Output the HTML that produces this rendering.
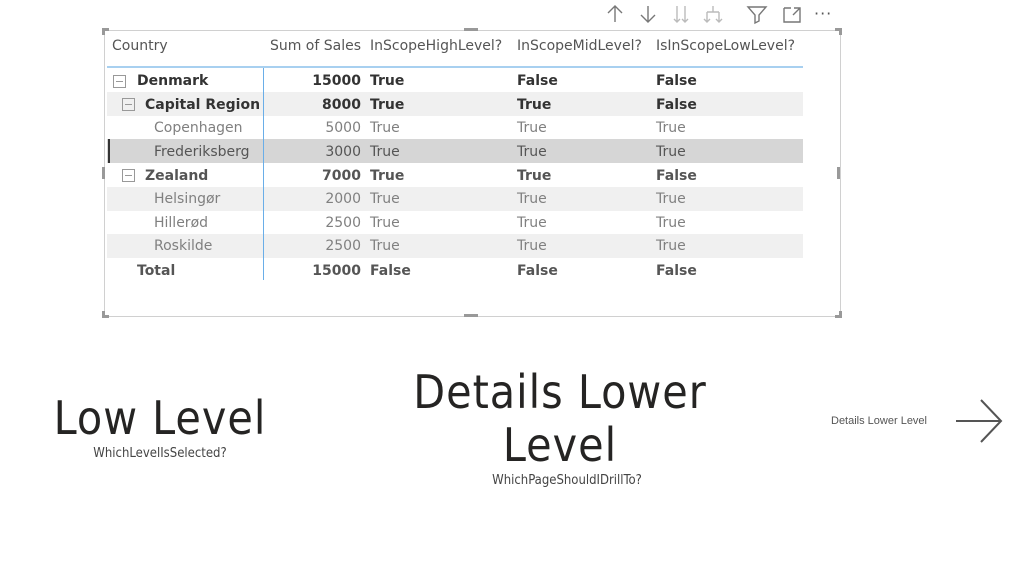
<!DOCTYPE html>
<html><head><meta charset="utf-8"><style>
*{margin:0;padding:0;box-sizing:border-box}
body{width:1024px;height:562px;background:#fff;position:relative;overflow:hidden;font-family:"DejaVu Sans","Liberation Sans",sans-serif}
.a{position:absolute;white-space:nowrap}
.t{font-size:14px;line-height:20px;margin-top:1px}
.h{color:#555;font-size:14px}
.b{font-weight:bold;color:#333}
.l{color:#808080}
.band{position:absolute;left:107px;width:696px;height:24px;background:#f0f0f0}
.r{text-align:right;width:100px}
.box{position:absolute;width:13px;height:13px;border:1px solid #999}
.box:after{content:"";position:absolute;left:2px;top:5px;width:7px;height:1px;background:#999}
.big{font-family:"Liberation Sans Narrow","DejaVu Sans Condensed",sans-serif;color:#252423;font-size:46px;letter-spacing:1px;text-align:center}
.sm{font-family:"Liberation Sans Narrow","DejaVu Sans Condensed",sans-serif;color:#444;font-size:13px;text-align:center}
</style></head><body>
<svg class="a" style="left:600px;top:3px" width="240" height="22" viewBox="600 3 240 22" fill="none" stroke="#777" stroke-width="1.4">
<path d="M615 6v16M608 13l7-7 7 7"/>
<path d="M648 6v16M641 15l7 7 7-7"/>
<path d="M677 6v16M685 6v16M674 19l3 3 3-3M682 19l3 3 3-3" stroke="#bbb"/>
<path d="M713 6v6M707 12h12M707 12v10M719 12v10M704 19l3 3 3-3M716 19l3 3 3-3" stroke="#bbb"/>
<path d="M748 7h18l-7 8v6l-4 2v-8z"/>
<path d="M784 8h7M784 8v14h16v-8M794 8h6v6M800 8l-7 7"/>
</svg>
<div class="a" style="left:814px;top:4px;font-size:16px;color:#555;letter-spacing:1px">···</div>
<div class="a" style="left:104px;top:30px;width:737px;height:287px;border:1px solid #d0d0d0"></div>
<div class="a" style="left:102px;top:28px;width:7px;height:7px;border-left:3px solid #999;border-top:3px solid #999"></div>
<div class="a" style="left:835px;top:28px;width:7px;height:7px;border-right:3px solid #999;border-top:3px solid #999"></div>
<div class="a" style="left:102px;top:311px;width:7px;height:7px;border-left:3px solid #999;border-bottom:3px solid #999"></div>
<div class="a" style="left:835px;top:311px;width:7px;height:7px;border-right:3px solid #999;border-bottom:3px solid #999"></div>
<div class="a" style="left:464px;top:28px;width:14px;height:3px;background:#999"></div>
<div class="a" style="left:464px;top:314px;width:14px;height:3px;background:#999"></div>
<div class="a" style="left:102px;top:167px;width:3px;height:12px;background:#999"></div>
<div class="a" style="left:837px;top:167px;width:3px;height:12px;background:#999"></div>
<div class="a t h" style="left:112px;top:35px">Country</div>
<div class="a t h" style="left:261px;top:35px;width:100px;text-align:right">Sum of Sales</div>
<div class="a t h" style="left:370px;top:35px">InScopeHighLevel?</div>
<div class="a t h" style="left:517px;top:35px">InScopeMidLevel?</div>
<div class="a t h" style="left:656px;top:35px">IsInScopeLowLevel?</div>
<div class="a" style="left:107px;top:66px;width:696px;height:2px;background:#a8d0f0"></div>
<div class="band" style="top:92px"></div>
<div class="band" style="top:139px;background:#d6d6d6"></div>
<div class="a" style="left:108px;top:139px;width:2px;height:24px;background:#333"></div>
<div class="band" style="top:187px"></div>
<div class="band" style="top:234px"></div>
<div class="a" style="left:263px;top:68px;width:1px;height:212px;background:#6aaee8"></div>
<div class="box" style="left:113px;top:75px"></div>
<div class="box" style="left:122px;top:98px"></div>
<div class="box" style="left:122px;top:169px"></div>

<div class="a t b" style="left:137px;top:70px">Denmark</div>
<div class="a t b r" style="left:261px;top:70px">15000</div>
<div class="a t b" style="left:370px;top:70px">True</div>
<div class="a t b" style="left:517px;top:70px">False</div>
<div class="a t b" style="left:656px;top:70px">False</div>

<div class="a t b" style="left:145px;top:94px">Capital Region</div>
<div class="a t b r" style="left:261px;top:94px">8000</div>
<div class="a t b" style="left:370px;top:94px">True</div>
<div class="a t b" style="left:517px;top:94px">True</div>
<div class="a t b" style="left:656px;top:94px">False</div>

<div class="a t l" style="left:154px;top:117px">Copenhagen</div>
<div class="a t l r" style="left:261px;top:117px">5000</div>
<div class="a t l" style="left:370px;top:117px">True</div>
<div class="a t l" style="left:517px;top:117px">True</div>
<div class="a t l" style="left:656px;top:117px">True</div>

<div class="a t" style="left:154px;top:141px;color:#555">Frederiksberg</div>
<div class="a t r" style="left:261px;top:141px;color:#555">3000</div>
<div class="a t" style="left:370px;top:141px;color:#555">True</div>
<div class="a t" style="left:517px;top:141px;color:#555">True</div>
<div class="a t" style="left:656px;top:141px;color:#555">True</div>

<div class="a t b" style="left:145px;top:165px;color:#555">Zealand</div>
<div class="a t b r" style="left:261px;top:165px;color:#555">7000</div>
<div class="a t b" style="left:370px;top:165px;color:#555">True</div>
<div class="a t b" style="left:517px;top:165px;color:#555">True</div>
<div class="a t b" style="left:656px;top:165px;color:#555">False</div>

<div class="a t l" style="left:154px;top:188px">Helsingør</div>
<div class="a t l r" style="left:261px;top:188px">2000</div>
<div class="a t l" style="left:370px;top:188px">True</div>
<div class="a t l" style="left:517px;top:188px">True</div>
<div class="a t l" style="left:656px;top:188px">True</div>

<div class="a t l" style="left:154px;top:212px">Hillerød</div>
<div class="a t l r" style="left:261px;top:212px">2500</div>
<div class="a t l" style="left:370px;top:212px">True</div>
<div class="a t l" style="left:517px;top:212px">True</div>
<div class="a t l" style="left:656px;top:212px">True</div>

<div class="a t l" style="left:154px;top:235px">Roskilde</div>
<div class="a t l r" style="left:261px;top:235px">2500</div>
<div class="a t l" style="left:370px;top:235px">True</div>
<div class="a t l" style="left:517px;top:235px">True</div>
<div class="a t l" style="left:656px;top:235px">True</div>

<div class="a t b" style="left:137px;top:260px;color:#555">Total</div>
<div class="a t b r" style="left:261px;top:260px;color:#555">15000</div>
<div class="a t b" style="left:370px;top:260px;color:#555">False</div>
<div class="a t b" style="left:517px;top:260px;color:#555">False</div>
<div class="a t b" style="left:656px;top:260px;color:#555">False</div>

<div class="a big" style="left:20px;top:391px;width:280px;line-height:54px">Low Level</div>
<div class="a sm" style="left:20px;top:446px;width:280px">WhichLevelIsSelected?</div>
<div class="a big" style="left:400px;top:366px;width:320px;line-height:53px;white-space:normal">Details Lower<br>Level</div>
<div class="a sm" style="left:400px;top:473px;width:334px">WhichPageShouldIDrillTo?</div>
<div class="a" style="left:831px;top:415px;font-size:11px;color:#555;font-family:'Liberation Sans',sans-serif">Details Lower Level</div>
<svg class="a" style="left:954px;top:398px" width="50" height="46" fill="none" stroke="#555" stroke-width="2"><path d="M2 23h44M27 2l20 21-20 21"/></svg>
</body></html>
